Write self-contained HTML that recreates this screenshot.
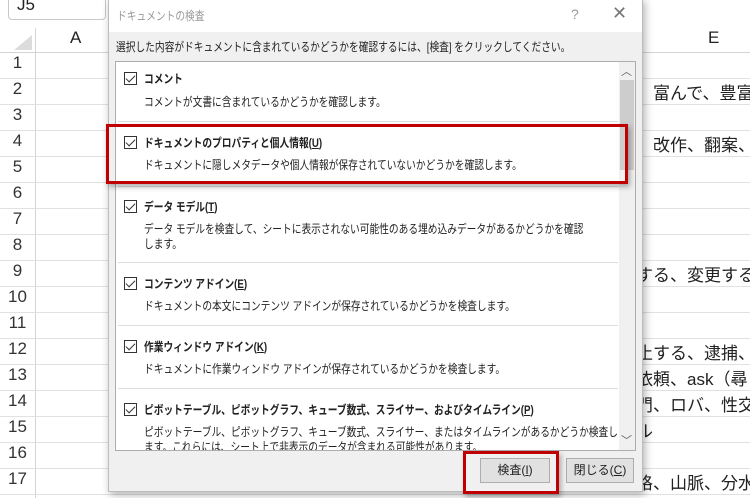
<!DOCTYPE html>
<html><head><meta charset="utf-8"><style>
*{margin:0;padding:0;box-sizing:border-box}
body{width:750px;height:498px;overflow:hidden;background:#fff;position:relative;font-family:"Liberation Sans","Noto Sans CJK JP",sans-serif;color:#222}
.abs{position:absolute}
.hl{position:absolute;left:0;width:750px;height:1px;background:#e1e1e1}
.rn{position:absolute;left:0;width:35px;text-align:center;font-size:17px;color:#333}
.cell{position:absolute;left:636px;font-size:17px;white-space:nowrap;color:#222}
.dlg{position:absolute;left:108px;top:-2px;width:535px;height:494px;background:#f0f0f0;border:1px solid #bcbcbc;box-shadow:2px 3px 8px rgba(0,0,0,.3)}
.t{font-size:12px;white-space:nowrap;position:absolute;transform:scaleX(0.81);transform-origin:0 0}
.b{font-weight:bold}
.cb{position:absolute;left:124px;width:13px;height:13px;border:1px solid #333;background:#fff}
.cb:after{content:"";position:absolute;left:3px;top:0px;width:4px;height:8px;border:solid #333;border-width:0 1.5px 1.5px 0;transform:rotate(45deg)}
.sep{position:absolute;left:118px;width:500px;height:1px;background:#ddd}
.btn{position:absolute;top:458px;height:25px;background:#e1e1e1;border:1px solid #adadad;font-size:12px;text-align:center;line-height:23px}
.red{position:absolute;border:3px solid #c00000}
u{text-decoration:underline}
</style></head><body>
<div class="abs" style="left:8px;top:-6px;width:98px;height:26px;border:1px solid #c8c8c8;border-radius:4px;font-size:17px;padding-left:8px;line-height:20px">J5</div>
<div class="abs" style="left:14px;top:35px;width:0;height:0;border-left:18px solid transparent;border-bottom:15px solid #dcdcdc"></div>
<div class="abs" style="left:70px;top:28px;font-size:17px">A</div>
<div class="abs" style="left:708px;top:28px;font-size:17px">E</div>
<div class="abs" style="left:35px;top:28px;width:1px;height:470px;background:#d4d4d4"></div>
<div class="hl" style="top:52px;background:#d4d4d4"></div>
<div class="hl" style="top:78px"></div><div class="hl" style="top:104px"></div><div class="hl" style="top:130px"></div><div class="hl" style="top:156px"></div><div class="hl" style="top:182px"></div><div class="hl" style="top:208px"></div><div class="hl" style="top:234px"></div><div class="hl" style="top:260px"></div><div class="hl" style="top:286px"></div><div class="hl" style="top:312px"></div><div class="hl" style="top:338px"></div><div class="hl" style="top:364px"></div><div class="hl" style="top:390px"></div><div class="hl" style="top:416px"></div><div class="hl" style="top:442px"></div><div class="hl" style="top:468px"></div><div class="hl" style="top:494px"></div>
<div class="rn" style="top:53px">1</div><div class="rn" style="top:79px">2</div><div class="rn" style="top:105px">3</div><div class="rn" style="top:131px">4</div><div class="rn" style="top:157px">5</div><div class="rn" style="top:183px">6</div><div class="rn" style="top:209px">7</div><div class="rn" style="top:235px">8</div><div class="rn" style="top:261px">9</div><div class="rn" style="top:287px">10</div><div class="rn" style="top:313px">11</div><div class="rn" style="top:339px">12</div><div class="rn" style="top:365px">13</div><div class="rn" style="top:391px">14</div><div class="rn" style="top:417px">15</div><div class="rn" style="top:443px">16</div><div class="rn" style="top:469px">17</div>
<div class="cell" style="top:79px">、富んで、豊富</div>
<div class="cell" style="top:131px">、改作、翻案、</div>
<div class="cell" style="top:261px">する、変更する</div>
<div class="cell" style="top:339px">止する、逮捕、</div>
<div class="cell" style="top:365px">依頼、ask（尋</div>
<div class="cell" style="top:391px">門、ロバ、性交</div>
<div class="cell" style="top:417px">ル</div>
<div class="cell" style="top:469px">格、山脈、分水</div>

<div class="dlg"></div>
<div class="abs" style="left:109px;top:-1px;width:533px;height:33px;background:#fff"></div>
<div class="t" style="left:117px;top:7px;color:#999">ドキュメントの検査</div>
<div class="abs" style="left:571px;top:6px;color:#999;font-size:14px">?</div>
<div class="abs" style="left:612px;top:3px;color:#777;font-size:18px">✕</div>
<div class="t" style="left:116px;top:38px">選択した内容がドキュメントに含まれているかどうかを確認するには、[検査] をクリックしてください。</div>
<div class="abs" style="left:115px;top:61px;width:521px;height:390px;background:#fff;border:1px solid #adadad"></div>
<div class="abs" style="left:619px;top:62px;width:16px;height:388px;background:#f0f0f0"></div>
<div class="abs" style="left:620px;top:80px;width:14px;height:90px;background:#cdcdcd"></div>
<div class="abs" style="left:621px;top:63px;color:#606060;font-size:11px">︿</div>
<div class="abs" style="left:621px;top:432px;color:#606060;font-size:11px">﹀</div>

<div class="cb" style="top:72px"></div><div class="t b" style="left:144px;top:70px">コメント</div>
<div class="t" style="left:144px;top:93px">コメントが文書に含まれているかどうかを確認します。</div>
<div class="sep" style="top:121px"></div>
<div class="cb" style="top:136px"></div><div class="t b" style="left:144px;top:134px">ドキュメントのプロパティと個人情報(<u>U</u>)</div>
<div class="t" style="left:144px;top:156px">ドキュメントに隠しメタデータや個人情報が保存されていないかどうかを確認します。</div>
<div class="sep" style="top:186px"></div>
<div class="cb" style="top:200px"></div><div class="t b" style="left:144px;top:198px">データ モデル(<u>T</u>)</div>
<div class="t" style="left:144px;top:220px">データ モデルを検査して、シートに表示されない可能性のある埋め込みデータがあるかどうかを確認</div>
<div class="t" style="left:144px;top:235px">します。</div>
<div class="sep" style="top:262px"></div>
<div class="cb" style="top:277px"></div><div class="t b" style="left:144px;top:275px">コンテンツ アドイン(<u>E</u>)</div>
<div class="t" style="left:144px;top:297px">ドキュメントの本文にコンテンツ アドインが保存されているかどうかを検査します。</div>
<div class="sep" style="top:325px"></div>
<div class="cb" style="top:340px"></div><div class="t b" style="left:144px;top:338px">作業ウィンドウ アドイン(<u>K</u>)</div>
<div class="t" style="left:144px;top:360px">ドキュメントに作業ウィンドウ アドインが保存されているかどうかを検査します。</div>
<div class="sep" style="top:388px"></div>
<div class="cb" style="top:403px"></div><div class="t b" style="left:144px;top:401px">ピボットテーブル、ピボットグラフ、キューブ数式、スライサー、およびタイムライン(<u>P</u>)</div>
<div class="t" style="left:144px;top:423px">ピボットテーブル、ピボットグラフ、キューブ数式、スライサー、またはタイムラインがあるかどうか検査し</div>
<div class="abs" style="left:144px;top:438px;width:470px;height:12px;overflow:hidden"><div class="t" style="left:0;top:0">ます。これらには、シート上で非表示のデータが含まれる可能性があります。</div></div>

<div class="btn" style="left:480px;width:70px">検査(<u>I</u>)</div>
<div class="btn" style="left:566px;width:68px">閉じる(<u>C</u>)</div>
<div class="red" style="left:106px;top:124px;width:522px;height:60px;box-shadow:2px 3px 5px rgba(0,0,0,.3)"></div>
<div class="red" style="left:463px;top:451px;width:96px;height:43px;box-shadow:2px 3px 5px rgba(0,0,0,.3)"></div>
</body></html>
